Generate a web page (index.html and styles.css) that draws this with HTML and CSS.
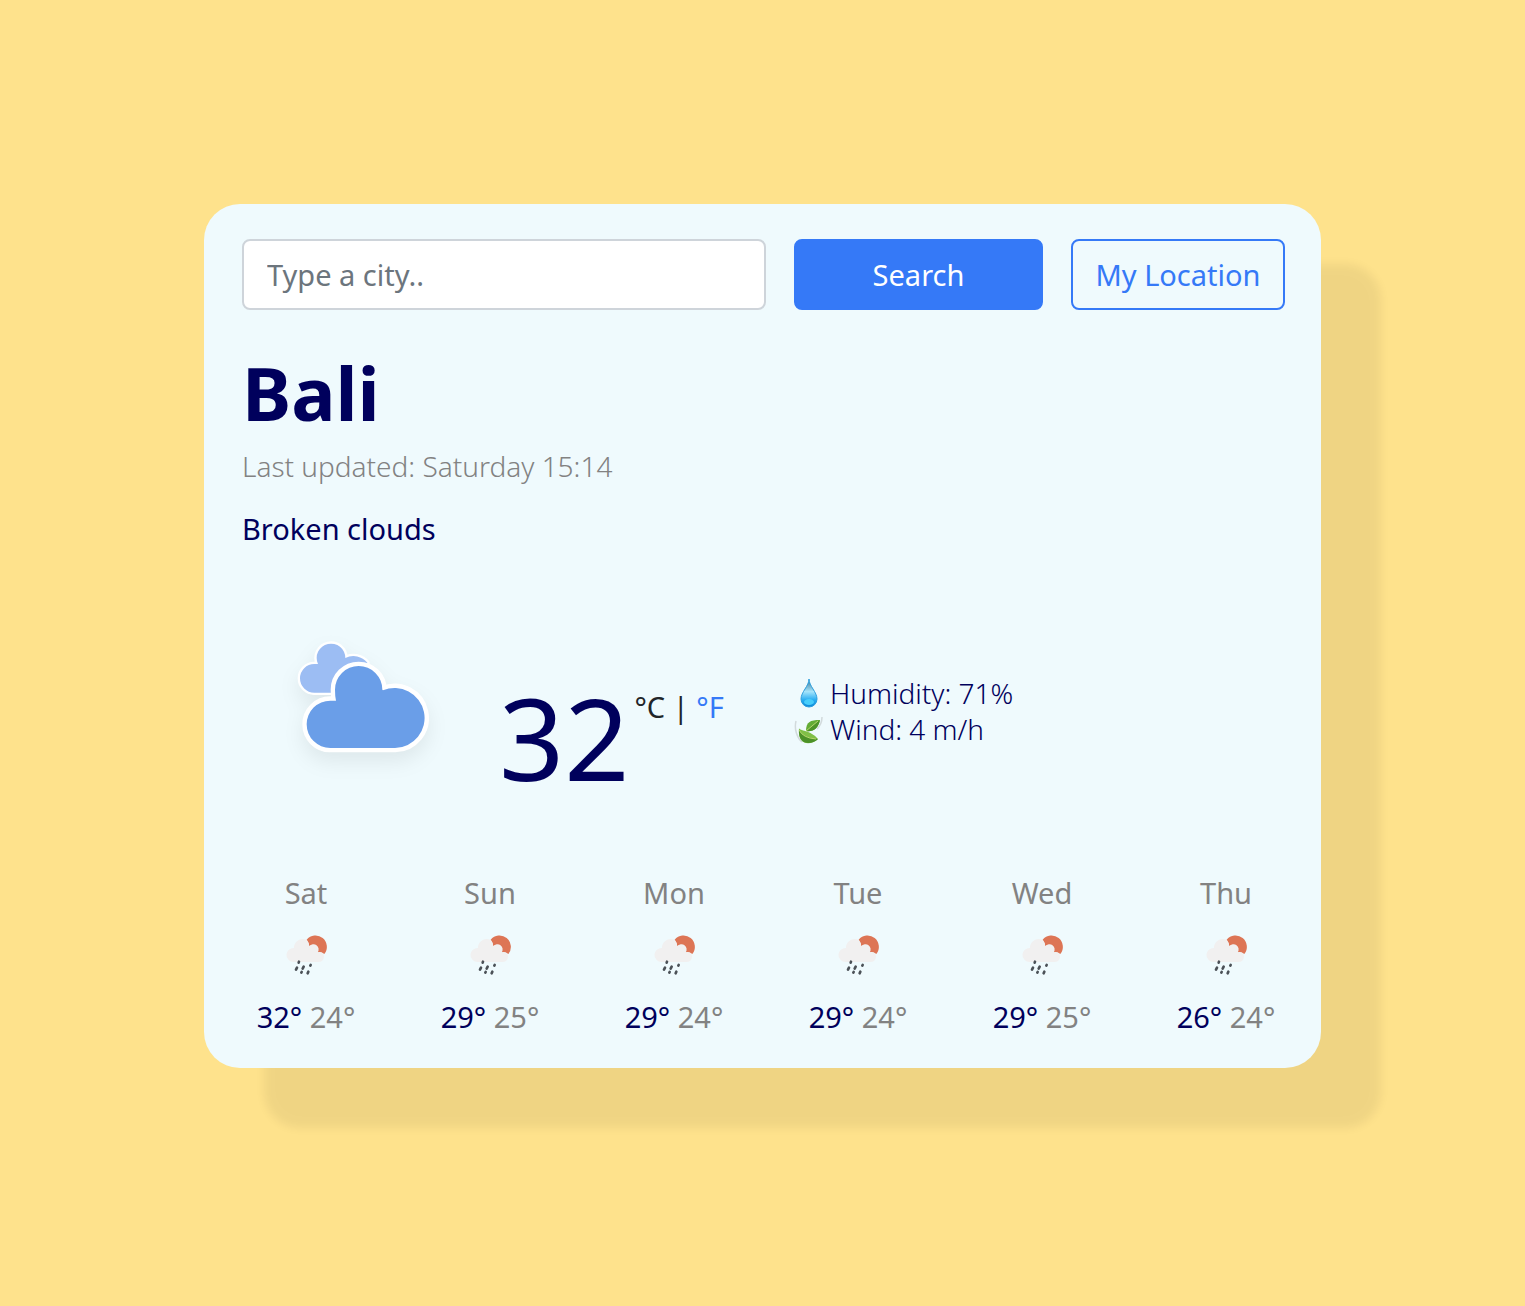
FILE: index.html
```html
<!DOCTYPE html>
<html lang="en">
<head>
<meta charset="utf-8">
<meta name="viewport" content="width=device-width, initial-scale=1">
<title>Weather</title>
<link rel="stylesheet" href="styles.css">
</head>
<body>
<svg class="defs" aria-hidden="true">
  <symbol id="rain" viewBox="0 0 210 210">
    <path fill="#dd7555" d="M107 59A34 34 0 1 1 160 102Q150 94 141 97Q140 76 125 75Q119 75 115 79Q114 68 107 59Z"/>
    <path fill="#f1f0f0" d="M66 126A21 21 0 0 1 69 84A26 26 0 0 1 108 61Q114 68 115 79A15 15 0 0 1 140 97Q160 95 159 111Q157 126 142 126Z"/>
    <g fill="none" stroke="#4b5157" stroke-width="8" stroke-linecap="round">
      <path d="M84 125l-1 3M78 143l-3 6M98 140l-3 6M119 135l-1 2M92 156l-1 2M112 155l-2 5"/>
    </g>
  </symbol>
</svg>
<main class="page">
  <div class="card">
    <form class="search">
      <input class="search-input" type="text" placeholder="Type a city.." aria-label="City">
      <button class="btn btn-primary" type="submit">Search</button>
      <button class="btn btn-outline" type="button">My Location</button>
    </form>
    <h1 class="city">Bali</h1>
    <p class="updated">Last updated: Saturday 15:14</p>
    <p class="description">Broken clouds</p>
    <section class="current">
      <div class="now">
        <svg class="now-icon" viewBox="0 0 540 480" role="img" aria-label="Broken clouds">
          <g class="cloud-shadow">
            <path class="cloud-back" d="M103 218A43 43 0 0 1 103 132L114 132A43 43 0 1 1 196 114A54 54 0 0 1 262 128L219 218Z"/>
            <path class="cloud-front" d="M151 384A71 71 0 0 1 151 242L168 242Q165 230 165 209A71 71 0 0 1 307 209L309 211A90 90 0 1 1 345 384Z"/>
          </g>
        </svg>
        <span class="temperature">32</span>
        <span class="units"><span>°C</span> | <a href="#">°F</a></span>
      </div>
      <ul class="stats">
        <li>
          <svg class="stat-icon" viewBox="0 0 36 36" aria-hidden="true">
            <defs><linearGradient id="water" x2="0" y2="1"><stop offset="0" stop-color="#35718f"/><stop offset=".45" stop-color="#a5e4fb"/><stop offset=".75" stop-color="#27adf2"/><stop offset="1" stop-color="#0c86d5"/></linearGradient></defs>
            <path fill="url(#water)" stroke="#2b9ede" d="M15 4C15 11 7 17 7 24A8 8 0 0 0 23 24C23 17 15 11 15 4Z"/>
            <ellipse cx="15" cy="27" rx="5" ry="3" fill="#46cdfb"/>
          </svg>
          <span>Humidity: 71%</span>
        </li>
        <li>
          <svg class="stat-icon" viewBox="0 0 36 36" aria-hidden="true">
            <path fill="none" stroke="#d2dadc" stroke-width="1.500" d="M2 10C0 18 3 27 8 31M28 6Q28 13 23 18"/>
            <path fill="#63ac35" d="M12 20C12 11 16 9 26 9C24 18 19 21 12 20Z"/>
            <path fill="#4d9428" d="M12 20Q17 15 26 9C24 18 19 21 12 20Z"/>
            <path fill="#80bf47" d="M5 17C5 20 17 19 24 28C18 34 3 36 5 17Z"/>
            <path fill="#4c9129" d="M5 19Q9 27 24 28C18 34 4 35 5 19Z"/>
            <path fill="none" stroke="#b9d76f" d="M5 19Q9 27 22 28M12 20L24 10"/>
          </svg>
          <span>Wind: 4 m/h</span>
        </li>
      </ul>
    </section>
    <section class="forecast">
      <div class="day"><span class="name">Sat</span><svg class="day-icon" aria-hidden="true"><use href="#rain"/></svg><span class="range"><b>32°</b> 24°</span></div>
      <div class="day"><span class="name">Sun</span><svg class="day-icon" aria-hidden="true"><use href="#rain"/></svg><span class="range"><b>29°</b> 25°</span></div>
      <div class="day"><span class="name">Mon</span><svg class="day-icon" aria-hidden="true"><use href="#rain"/></svg><span class="range"><b>29°</b> 24°</span></div>
      <div class="day"><span class="name">Tue</span><svg class="day-icon" aria-hidden="true"><use href="#rain"/></svg><span class="range"><b>29°</b> 24°</span></div>
      <div class="day"><span class="name">Wed</span><svg class="day-icon" aria-hidden="true"><use href="#rain"/></svg><span class="range"><b>29°</b> 25°</span></div>
      <div class="day"><span class="name">Thu</span><svg class="day-icon" aria-hidden="true"><use href="#rain"/></svg><span class="range"><b>26°</b> 24°</span></div>
    </section>
  </div>
</main>
</body>
</html>
```
FILE: styles.css
```css
* { box-sizing: border-box; }
body {
  margin: 0;
  background: #fee28c;
  font-family: "Noto Sans", "Open Sans", sans-serif;
  font-size: 29px;
  line-height: 36px;
  color: #212529;
}
h1, p, ul { margin: 0; padding: 0; }
.defs { position: absolute; width: 0; height: 0; }
.page { padding: 204px; }
.card {
  padding: 35px 31px 33px 38px;
  border-radius: 36px;
  background: #effafd;
  box-shadow: 60px 60px 10px rgba(0, 0, 0, .06);
}
.search {
  display: grid;
  grid-template-columns: 524fr 249fr 214fr;
  gap: 28px;
  margin-right: 5px;
}
.search-input, .btn {
  min-width: 0;
  height: 71px;
  border-radius: 8px;
  font: inherit;
}
.search-input {
  padding: 0 23px;
  border: 2px solid #ced4da;
  background: #fff;
  color: #212529;
}
.search-input::placeholder { color: #6c757d; opacity: 1; }
.btn { padding: 0; border: 2px solid #3579f7; white-space: nowrap; }
.btn-primary { background: #3579f7; color: #fff; }
.btn-outline { background: transparent; color: #3579f7; }
.city {
  margin: 39px 0 11px;
  font-size: 74px;
  line-height: 88px;
  font-weight: 700;
  color: #00005c;
}
.updated { color: #828282; font-size: 28px; font-weight: 300; }
.description { margin-top: 27px; color: #00005c; }
.current {
  display: grid;
  grid-template-columns: 1fr 1fr;
  gap: 56px;
  margin-top: 73px;
}
.now { display: flex; align-items: flex-start; padding-left: 38px; }
.now-icon { flex: none; width: 180px; height: 160px; overflow: visible; }
.cloud-shadow { filter: drop-shadow(0 28px 28px rgba(0, 0, 0, .07)); }
.cloud-back, .cloud-front { stroke: #fff; stroke-linejoin: round; paint-order: stroke; }
.cloud-back { fill: #9cbdf3; stroke-width: 14px; }
.cloud-front { fill: #6a9ee8; stroke-width: 26px; }
.temperature {
  margin: 57px 5px 0 39px;
  font-size: 114px;
  line-height: 120px;
  color: #00005c;
}
.units { margin-top: 69px; white-space: nowrap; }
.units a { color: #3579f7; text-decoration: none; }
.stats {
  margin-top: 55px;
  list-style: none;
  font-size: 28px;
  font-weight: 300;
  color: #00005c;
}
.stats li { display: flex; align-items: center; }
.stat-icon { flex: none; width: 36px; height: 36px; }
.forecast {
  display: grid;
  grid-template-columns: repeat(6, 1fr);
  gap: 56px;
  margin-top: 78px;
  color: #828282;
}
.day { display: flex; flex-direction: column; align-items: center; gap: 9px; }
.day-icon { width: 70px; height: 70px; }
.range { white-space: nowrap; }
.range b { font-weight: 400; color: #00005c; }
```
